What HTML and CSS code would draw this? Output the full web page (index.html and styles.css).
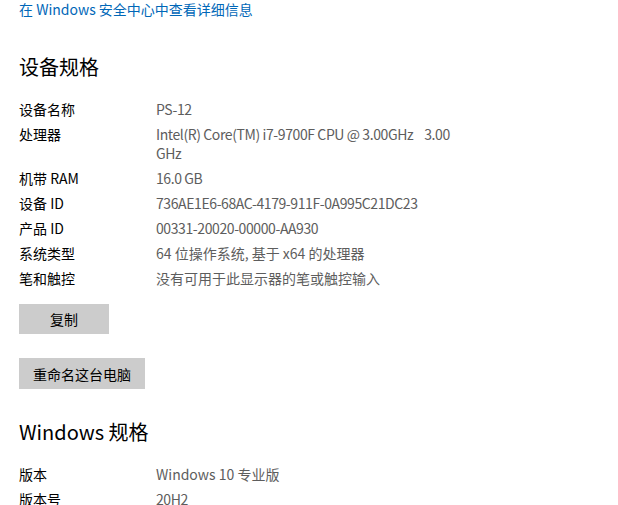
FILE: index.html
```html
<!DOCTYPE html>
<html lang="zh-CN">
<head>
  <meta charset="UTF-8">
  <meta name="viewport" content="width=device-width, initial-scale=1.0">
  <title>关于</title>
  <link rel="stylesheet" href="styles.css">
</head>
<body>
  <div class="page">
    <a href="#" class="link">在 Windows 安全中心中查看详细信息</a>

    <section class="section">
      <h2 class="section-title">设备规格</h2>
      <div class="specs">
        <div class="spec-label">设备名称</div>
        <div class="spec-value latin">PS-12</div>
        <div class="spec-label">处理器</div>
        <div class="spec-value latin">Intel(R) Core(TM) i7-9700F CPU @ 3.00GHz&nbsp;&nbsp;&nbsp; 3.00 GHz</div>
        <div class="spec-label">机带 RAM</div>
        <div class="spec-value latin">16.0 GB</div>
        <div class="spec-label">设备 ID</div>
        <div class="spec-value latin">736AE1E6-68AC-4179-911F-0A995C21DC23</div>
        <div class="spec-label">产品 ID</div>
        <div class="spec-value latin">00331-20020-00000-AA930</div>
        <div class="spec-label">系统类型</div>
        <div class="spec-value">64 位操作系统, 基于 x64 的处理器</div>
        <div class="spec-label">笔和触控</div>
        <div class="spec-value">没有可用于此显示器的笔或触控输入</div>
      </div>

      <div class="actions">
        <button class="button button-copy">复制</button>
        <button class="button">重命名这台电脑</button>
      </div>
    </section>

    <section class="section">
      <h2 class="section-title">Windows 规格</h2>
      <div class="specs">
        <div class="spec-label">版本</div>
        <div class="spec-value">Windows 10 专业版</div>
        <div class="spec-label">版本号</div>
        <div class="spec-value latin">20H2</div>
      </div>
    </section>
  </div>
</body>
</html>
```

FILE: styles.css
```css
body {
  font-family: "Noto Sans CJK SC", "Noto Sans", sans-serif;
  font-size: 14px;
  background-color: #fff;
  color: #000;
  margin: 0;
  padding: 0;
}

.page {
  padding: 0 19px;
}

.link {
  display: block;
  line-height: 19px;
  color: #0067b8;
  text-decoration: none;
}

.section {
  margin-top: 34px;
}

.section + .section {
  margin-top: 29px;
}

.section-title {
  font-size: 20px;
  font-weight: 400;
  line-height: 28px;
  margin: 0 0 19px;
}

.specs {
  display: grid;
  grid-template-columns: 137px 310px;
  row-gap: 6px;
  line-height: 19px;
}

.spec-value {
  color: #5d5d5d;
}

/* Segoe UI runs a bit narrower than the CJK font's Latin glyphs */
.latin {
  letter-spacing: -0.4px;
}

.actions {
  display: flex;
  flex-direction: column;
  align-items: flex-start;
  gap: 24px;
  margin-top: 16px;
}

.button {
  font-family: inherit;
  font-size: 14px;
  color: #000;
  background-color: #cccccc;
  border: none;
  height: 31px;
  padding: 0 14px;
  cursor: pointer;
}

.button-copy {
  width: 90px;
  height: 30px;
}
```
